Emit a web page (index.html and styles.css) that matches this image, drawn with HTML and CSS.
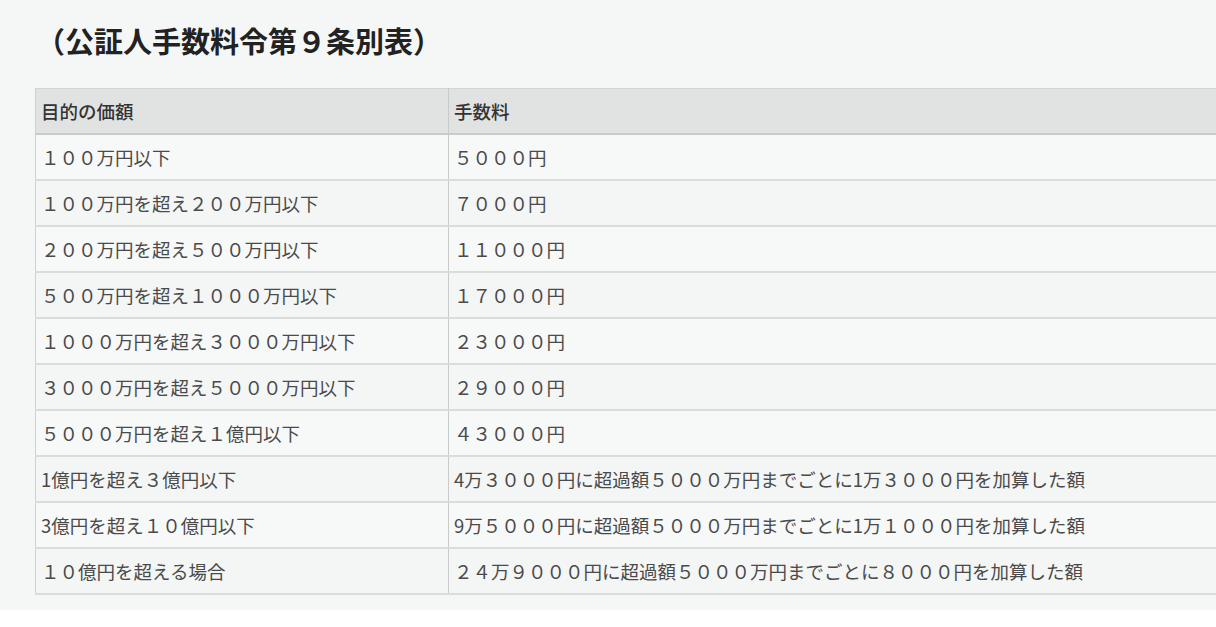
FILE: index.html
```html
<!DOCTYPE html>
<html lang="ja">
<head>
<meta charset="utf-8">
<title>公証人手数料令第９条別表</title>
<link rel="stylesheet" href="styles.css">
</head>
<body>
<section class="section">
  <h1 class="title">（公証人手数料令第９条別表）</h1>
  <div class="table-wrap">
    <table class="fee-table">
      <colgroup><col class="col-a"><col class="col-b"></colgroup>
      <thead>
        <tr><th>目的の価額</th><th>手数料</th></tr>
      </thead>
      <tbody>
        <tr><td>１００万円以下</td><td>５０００円</td></tr>
        <tr><td>１００万円を超え２００万円以下</td><td>７０００円</td></tr>
        <tr><td>２００万円を超え５００万円以下</td><td>１１０００円</td></tr>
        <tr><td>５００万円を超え１０００万円以下</td><td>１７０００円</td></tr>
        <tr><td>１０００万円を超え３０００万円以下</td><td>２３０００円</td></tr>
        <tr><td>３０００万円を超え５０００万円以下</td><td>２９０００円</td></tr>
        <tr><td>５０００万円を超え１億円以下</td><td>４３０００円</td></tr>
        <tr><td>1億円を超え３億円以下</td><td>4万３０００円に超過額５０００万円までごとに1万３０００円を加算した額</td></tr>
        <tr><td>3億円を超え１０億円以下</td><td>9万５０００円に超過額５０００万円までごとに1万１０００円を加算した額</td></tr>
        <tr><td>１０億円を超える場合</td><td>２４万９０００円に超過額５０００万円までごとに８０００円を加算した額</td></tr>
      </tbody>
    </table>
  </div>
</section>
</body>
</html>
```

FILE: styles.css
```css
html, body {
  margin: 0;
  padding: 0;
  background: #ffffff;
  font-family: "Noto Sans CJK JP", "Noto Sans", sans-serif;
  color: #444;
  overflow: hidden;
}

.section {
  background: #f5f7f7;
  padding: 20px 0 15px 35px;
  overflow: hidden;
}

.title {
  margin: 0 0 27px 1px;
  font-size: 29px;
  font-weight: 700;
  color: #222;
  line-height: 41px;
}

.table-wrap {
  overflow: hidden;
}

.fee-table {
  width: 1300px;
  table-layout: fixed;
  border-collapse: collapse;
  border-left: 1px solid #cfd0d0;
  border-top: 1px solid #d3d4d4;
}

.col-a { width: 413px; }

.fee-table th,
.fee-table td {
  text-align: left;
  padding: 0 5px;
  height: 44px;
  font-size: 18.5px;
  line-height: 26px;
  border-bottom: 2px solid #dadcdc;
  border-right: 1px solid #c9caca;
  white-space: nowrap;
}

.fee-table th {
  background: #e1e3e2;
  font-weight: 500;
  color: #333;
  border-bottom-color: #c9cbcb;
}

.fee-table td {
  background: #f7f8f8;
  font-weight: 400;
  color: #4a4a4a;
}

.fee-table tbody tr:nth-child(even) td {
  background: #f3f6f5;
}
```
